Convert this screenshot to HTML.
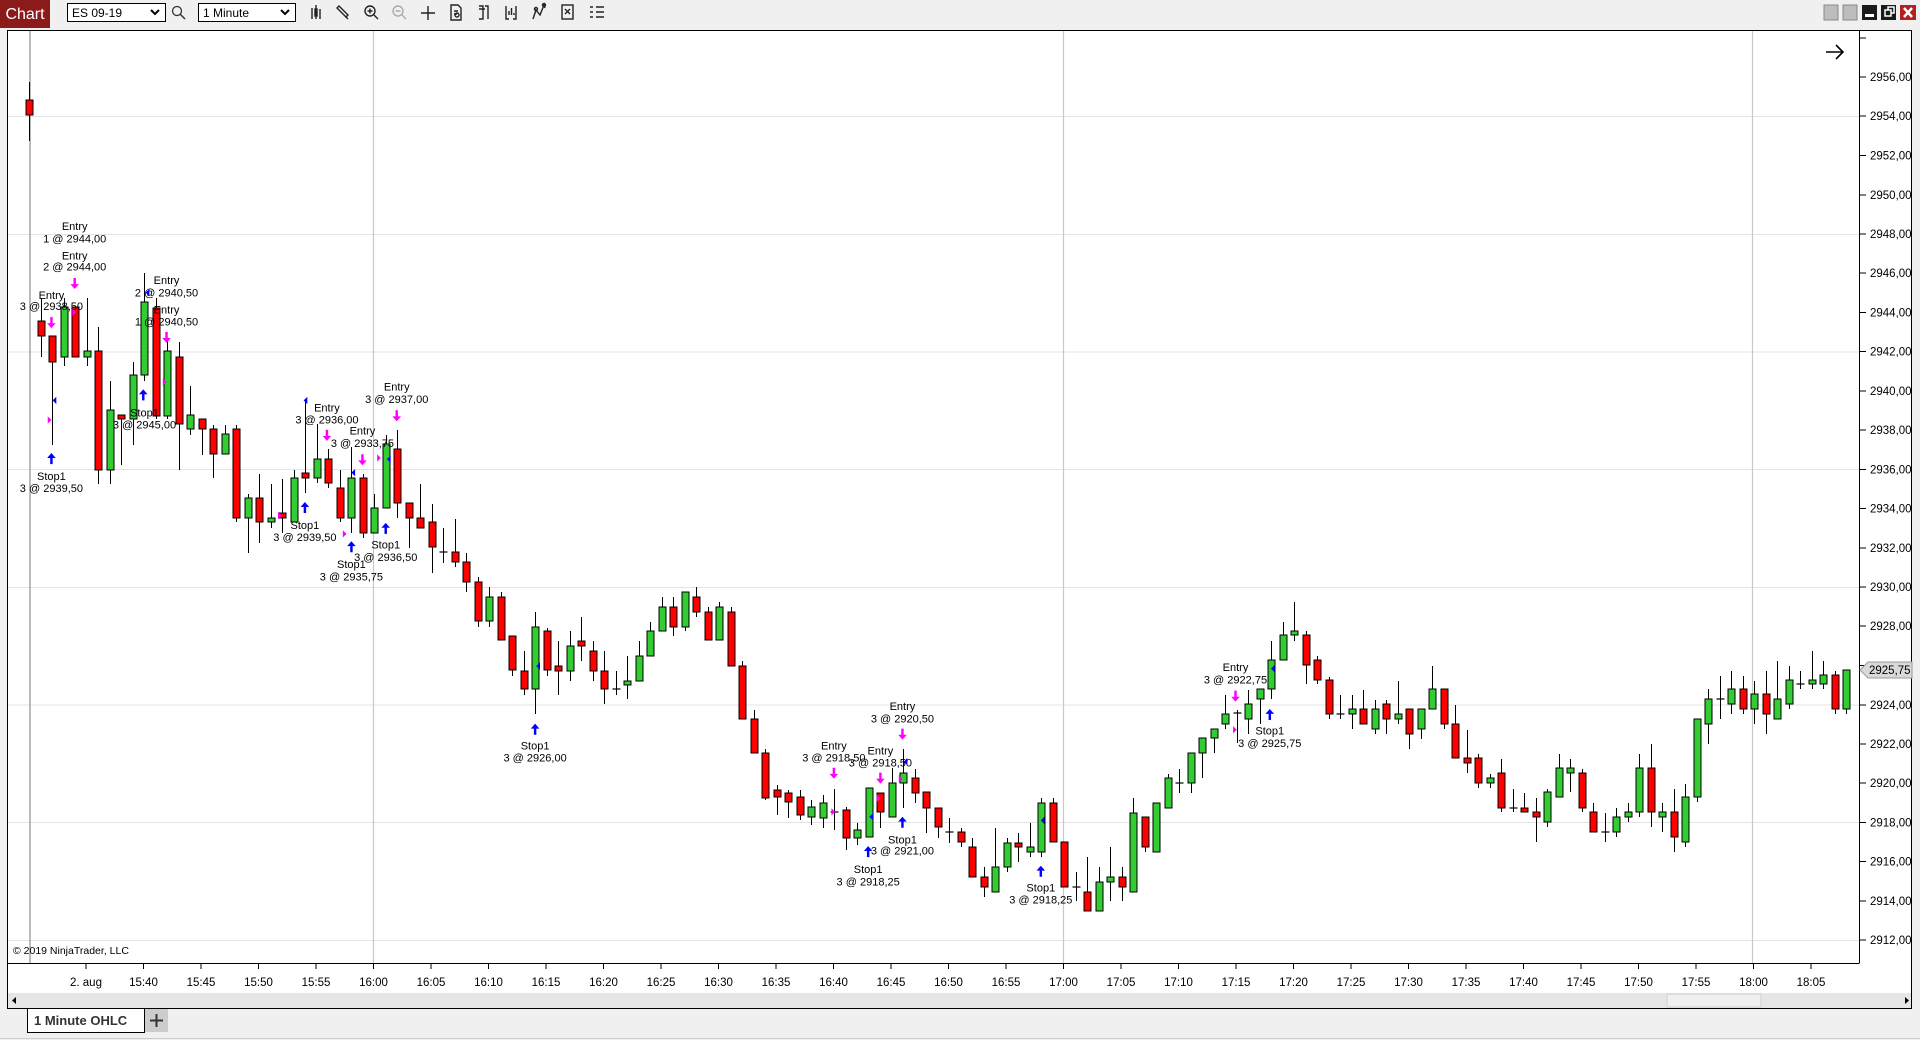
<!DOCTYPE html>
<html><head><meta charset="utf-8">
<style>
html,body{margin:0;padding:0;background:#f0f0f0;width:1920px;height:1040px;overflow:hidden}
svg{display:block}
text{font-family:"Liberation Sans",Arial,sans-serif}
</style></head>
<body>
<svg id="s" width="1920" height="1040" viewBox="0 0 1920 1040" xmlns="http://www.w3.org/2000/svg">
<rect x="0" y="0" width="1920" height="1040" fill="#f0f0f0"/>
<rect x="0" y="0" width="50" height="28" fill="#8b1a1a"/>
<text x="25" y="19" font-size="16" fill="#fff" text-anchor="middle">Chart</text>
<rect x="67.5" y="3.5" width="98" height="18" fill="#fff" stroke="#000"/>
<text x="72" y="17" font-size="12">ES 09-19</text>
<path d="M151 10 l4 4 l4 -4" stroke="#000" stroke-width="2" fill="none"/>
<circle cx="177" cy="11" r="4.5" stroke="#333" stroke-width="1.3" fill="none"/><path d="M180 14 l5 5" stroke="#333" stroke-width="1.5"/>
<rect x="198.5" y="3.5" width="97" height="18" fill="#fff" stroke="#000"/>
<text x="203" y="17" font-size="12">1 Minute</text>
<path d="M281 10 l4 4 l4 -4" stroke="#000" stroke-width="2" fill="none"/>
<g stroke="#222" stroke-width="1.4" fill="none">
<path d="M312 8v11M316 5v14M320 9v10"/><rect x="315" y="9" width="2" height="7" fill="#222"/>
<path d="M339 6l9 9-2 2-9-9zM346 17l2 2"/>
<circle cx="370" cy="11" r="5"/><path d="M374 15l4 4M367.5 11h5M370 8.5v5"/>
<circle cx="398" cy="11" r="5" stroke="#aaa"/><path d="M402 15l4 4M395.5 11h5" stroke="#aaa"/>
<path d="M428 6v14M421 13h14"/>
<path d="M451 5h7l3 3v12h-10zM454 11h4M454 14h3" /><circle cx="457" cy="15" r="2"/>
<path d="M479 6h4v13h-4M479 9h6M485 6h3v13"/>
<path d="M506 6v13h3M516 6v13h-3M509 15v-4M511.5 15v-7M514 15v-2"/>
<path d="M533 19l3-9 4 5 4-10 1 3"/><circle cx="536" cy="9" r="1.5"/><circle cx="544" cy="5" r="1.5"/>
<rect x="562" y="5" width="11" height="14"/><path d="M565 9l5 5M570 9l-5 5"/>
<path d="M590 7h3M590 12h3M590 17h3M596 7h8M596 12h8M596 17h8"/>
</g>
<rect x="1824" y="5" width="14" height="15" fill="#bdbdbd" stroke="#888"/>
<rect x="1843" y="5" width="14" height="15" fill="#bdbdbd" stroke="#888"/>
<rect x="1862" y="5" width="15" height="15" fill="#1a1a1a"/><rect x="1865" y="14" width="9" height="3" fill="#fff"/>
<rect x="1881" y="5" width="15" height="15" fill="#1a1a1a"/><path d="M1885 10h6v6h-6zM1888 10v-3h6v6h-3" stroke="#fff" stroke-width="1.5" fill="none"/>
<rect x="1900" y="5" width="16" height="15" fill="#b22222"/><path d="M1904 8l8 9M1912 8l-8 9" stroke="#fff" stroke-width="2.5"/>

<rect x="7.5" y="30.5" width="1904" height="978" fill="#fff" stroke="#000"/>
<g stroke="#e3e3e3" stroke-width="1">
<path d="M8 116.5H1859M8 234.5H1859M8 352H1859M8 469.5H1859M8 587.5H1859M8 705H1859M8 822.5H1859M8 940.5H1859"/>
</g>
<g stroke="#c8c8c8" stroke-width="1.2">
<path d="M373.5 31V963M1063.5 31V963M1752.5 31V963"/>
</g>
<path d="M30 31V963" stroke="#aaa" stroke-width="1.6"/>
<path d="M1859.5 31V963" stroke="#000"/>
<path d="M8 963.5H1859.5" stroke="#000"/>
<g stroke="#000"><path d="M1859 38h7M1859 77h7M1859 116h7M1859 155.5h7M1859 195h7M1859 234h7M1859 273h7M1859 312.5h7M1859 351.5h7M1859 391h7M1859 430h7M1859 469.5h7M1859 508.5h7M1859 548h7M1859 587h7M1859 626h7M1859 665.5h7M1859 705h7M1859 744h7M1859 783h7M1859 822.5h7M1859 861.5h7M1859 901h7M1859 940h7"/></g>
<g font-size="11.5" fill="#000">
<text x="1870" y="81">2956,00</text><text x="1870" y="120">2954,00</text><text x="1870" y="159.5">2952,00</text><text x="1870" y="199">2950,00</text><text x="1870" y="238">2948,00</text><text x="1870" y="277">2946,00</text><text x="1870" y="316.5">2944,00</text><text x="1870" y="355.5">2942,00</text><text x="1870" y="395">2940,00</text><text x="1870" y="434">2938,00</text><text x="1870" y="473.5">2936,00</text><text x="1870" y="512.5">2934,00</text><text x="1870" y="552">2932,00</text><text x="1870" y="591">2930,00</text><text x="1870" y="630">2928,00</text><text x="1870" y="709">2924,00</text><text x="1870" y="748">2922,00</text><text x="1870" y="787">2920,00</text><text x="1870" y="826.5">2918,00</text><text x="1870" y="865.5">2916,00</text><text x="1870" y="905">2914,00</text><text x="1870" y="944">2912,00</text>
</g>
<path d="M1860 670l8-8h44v16h-44z" fill="#d9d9d9" stroke="#999"/>
<text x="1869" y="674" font-size="11.5">2925,75</text>
<path d="M1826 52h17M1836 45l7 7-7 7" stroke="#000" stroke-width="1.6" fill="none"/>
<g stroke="#000" id="ticks"></g>
<g font-size="11.5" text-anchor="middle">
<text x="86" y="986">2. aug</text><text x="143.5" y="986">15:40</text><text x="201" y="986">15:45</text><text x="258.5" y="986">15:50</text><text x="316" y="986">15:55</text><text x="373.5" y="986">16:00</text><text x="431" y="986">16:05</text><text x="488.5" y="986">16:10</text><text x="546" y="986">16:15</text><text x="603.5" y="986">16:20</text><text x="661" y="986">16:25</text><text x="718.5" y="986">16:30</text><text x="776" y="986">16:35</text><text x="833.5" y="986">16:40</text><text x="891" y="986">16:45</text><text x="948.5" y="986">16:50</text><text x="1006" y="986">16:55</text><text x="1063.5" y="986">17:00</text><text x="1121" y="986">17:05</text><text x="1178.5" y="986">17:10</text><text x="1236" y="986">17:15</text><text x="1293.5" y="986">17:20</text><text x="1351" y="986">17:25</text><text x="1408.5" y="986">17:30</text><text x="1466" y="986">17:35</text><text x="1523.5" y="986">17:40</text><text x="1581" y="986">17:45</text><text x="1638.5" y="986">17:50</text><text x="1696" y="986">17:55</text><text x="1753.5" y="986">18:00</text><text x="1811" y="986">18:05</text>
</g>
<text x="13" y="954" font-size="10.5">© 2019 NinjaTrader, LLC</text>
<rect x="8" y="993" width="1903" height="15" fill="#e6e6e6"/>
<path d="M16 997v7l-4-3.5z" fill="#000"/>
<path d="M1905 997v7l4-3.5z" fill="#000"/>
<rect x="1667" y="994" width="94" height="13" fill="#f0f0f0" stroke="#d0d0d0"/>
<rect x="27.5" y="1008.5" width="117" height="24" fill="#fff" stroke="#000"/>
<text x="34" y="1025" font-size="13" font-weight="bold" fill="#333">1 Minute OHLC</text>
<rect x="145" y="1009" width="23" height="23" fill="#cccccc"/>
<path d="M156.5 1014v13M150 1020.5h13" stroke="#333" stroke-width="2"/>
<path d="M0.5 1038.5H1919.5" stroke="#ccc"/>

<g id="candles"></g>

<g transform="scale(1.22449)" font-size="9" text-anchor="middle" fill="#000">
<text x="61" y="188">Entry</text><text x="61" y="198">1 @ 2944,00</text>
<text x="61" y="212">Entry</text><text x="61" y="221">2 @ 2944,00</text>
<text x="42" y="244">Entry</text><text x="42" y="253">3 @ 2938,50</text>
<text x="42" y="392">Stop1</text><text x="42" y="402">3 @ 2939,50</text>
<text x="136" y="232">Entry</text><text x="136" y="242">2 @ 2940,50</text>
<text x="136" y="256">Entry</text><text x="136" y="266">1 @ 2940,50</text>
<text x="118" y="340">Stop1</text><text x="118" y="350">3 @ 2945,00</text>
<text x="267" y="336">Entry</text><text x="267" y="346">3 @ 2936,00</text>
<text x="296" y="355">Entry</text><text x="296" y="365">3 @ 2933,75</text>
<text x="324" y="319">Entry</text><text x="324" y="329">3 @ 2937,00</text>
<text x="249" y="432">Stop1</text><text x="249" y="442">3 @ 2939,50</text>
<text x="287" y="464">Stop1</text><text x="287" y="474">3 @ 2935,75</text>
<text x="315" y="448">Stop1</text><text x="315" y="458">3 @ 2936,50</text>
<text x="437" y="612">Stop1</text><text x="437" y="622">3 @ 2926,00</text>
<text x="681" y="612">Entry</text><text x="681" y="622">3 @ 2918,50</text>
<text x="719" y="616">Entry</text><text x="719" y="626">3 @ 2918,50</text>
<text x="737" y="580">Entry</text><text x="737" y="590">3 @ 2920,50</text>
<text x="709" y="713">Stop1</text><text x="709" y="723">3 @ 2918,25</text>
<text x="737" y="689">Stop1</text><text x="737" y="698">3 @ 2921,00</text>
<text x="850" y="728">Stop1</text><text x="850" y="738">3 @ 2918,25</text>
<text x="1009" y="548">Entry</text><text x="1009" y="558">3 @ 2922,75</text>
<text x="1037" y="600">Stop1</text><text x="1037" y="610">3 @ 2925,75</text>
</g>
<g id="marks" transform="scale(1.22449)"></g>
</svg>
<script>
var NS="http://www.w3.org/2000/svg";
function el(p,t,a){var e=document.createElementNS(NS,t);for(var k in a)e.setAttribute(k,a[k]);p.appendChild(e);return e;}
var tk=document.getElementById('ticks');
for(var i=4;i<=154;i+=5){var x=40+11.5*i;el(tk,'path',{d:'M'+x+' 963v6'});}
var D=[
[-1,100,115,82,141,'r'],
[0,321,336,298,357,'r'],[1,336,362,336,445,'r'],[2,307,357,298,366,'g'],[3,307,357,307,357,'r'],[4,351,357,298,366,'g'],
[5,351,470,327,484,'r'],[6,410,470,381,484,'g'],[7,415,419,415,465,'r'],[8,375,419,362,445,'g'],[9,302,375,273,381,'g'],
[10,308,416,298,419,'r'],[11,351,416,338,419,'g'],[12,357,424,342,470,'r'],[13,415,429,386,435,'g'],[14,419,429,419,455,'r'],
[15,429,454,425,478,'r'],[16,434,454,425,454,'g'],[17,429,518,425,522,'r'],[18,498,518,494,553,'g'],[19,498,522,474,543,'r'],
[20,518,522,484,528,'g'],[21,513,518,479,533,'r'],[22,478,522,470,522,'g'],[23,473,478,400,493,'r'],[24,459,478,424,483,'g'],
[25,459,483,449,488,'r'],[26,488,518,470,522,'r'],[27,478,518,447,533,'g'],[28,478,533,474,538,'r'],[29,508,533,494,533,'g'],
[30,444,508,435,508,'g'],[31,449,503,430,518,'r'],[32,503,518,503,548,'r'],[33,518,528,484,528,'r'],[34,522,547,504,573,'r'],
[35,552,552,528,563,'d'],[36,552,562,519,567,'r'],[37,562,582,553,592,'r'],[38,582,621,577,627,'r'],[39,597,621,587,627,'g'],
[40,597,640,592,640,'r'],[41,636,670,636,676,'r'],[42,671,689,651,695,'r'],[43,627,689,612,714,'g'],[44,631,670,628,676,'r'],
[45,666,671,641,695,'r'],[46,646,671,631,681,'g'],[47,641,646,617,661,'r'],[48,651,671,641,681,'r'],[49,671,689,651,704,'r'],
[50,689,689,671,695,'d'],[51,681,684,656,699,'g'],[52,656,681,641,681,'g'],[53,631,656,622,656,'g'],[54,607,631,597,631,'g'],
[55,607,627,597,636,'r'],[56,592,627,592,631,'g'],[57,597,612,587,617,'r'],[58,612,640,607,640,'r'],[59,607,640,602,640,'g'],
[60,612,666,607,666,'r'],[61,666,719,661,719,'r'],[62,719,753,710,753,'r'],[63,753,798,749,800,'r'],
[64,790,797,785,815,'r'],[65,793,802,790,818,'r'],[66,797,815,790,820,'r'],[67,807,817,800,825,'g'],[68,803,818,795,828,'g'],
[69,812,812,789,830,'d'],[70,810,838,807,850,'r'],
[71,788,837,788,837,'g'],[72,793,812,793,828,'r'],[73,783,817,768,817,'g'],[74,773,783,749,808,'g'],[75,778,793,769,803,'r'],
[76,792,808,792,833,'r'],[77,808,827,808,838,'r'],[78,832,832,818,843,'d'],[79,832,842,828,847,'r'],[80,847,877,838,877,'r'],
[81,877,887,867,897,'r'],[82,867,892,828,892,'g'],[83,843,867,838,872,'g'],[84,843,847,833,862,'r'],[85,847,852,823,857,'g'],
[86,803,852,798,857,'g'],[87,803,842,798,842,'r'],[88,842,887,842,887,'r'],[89,887,887,872,901,'d'],[90,892,911,857,911,'r'],
[91,882,911,867,911,'g'],[92,877,882,847,901,'g'],[93,877,887,867,901,'r'],[94,813,892,798,892,'g'],[95,817,847,817,852,'r'],
[96,803,852,803,852,'g'],[97,778,808,774,808,'g'],[98,783,783,769,793,'d'],[99,753,783,753,793,'g'],[100,738,753,738,778,'g'],
[101,729,738,729,753,'g'],[102,714,724,695,729,'g'],[103,713,713,710,743,'d'],[104,704,719,690,734,'g'],[105,689,699,689,724,'g'],
[106,660,689,641,699,'g'],[107,635,660,622,660,'g'],[108,631,635,602,641,'g'],[109,635,665,631,684,'r'],[110,660,680,656,684,'r'],
[111,680,714,677,719,'r'],[112,714,714,695,719,'d'],[113,709,714,695,729,'g'],[114,709,724,690,724,'r'],[115,709,729,700,734,'g'],
[116,704,719,700,734,'r'],[117,714,719,681,724,'g'],[118,709,734,709,749,'r'],[119,709,729,709,739,'g'],[120,689,709,666,709,'g'],
[121,689,724,689,729,'r'],[122,724,758,705,758,'r'],[123,758,763,730,773,'r'],[124,758,783,754,788,'r'],[125,778,783,774,788,'g'],
[126,773,808,759,812,'r'],[127,808,808,789,812,'d'],[128,808,812,793,812,'r'],[129,812,817,798,842,'r'],[130,792,822,789,827,'g'],
[131,768,797,754,797,'g'],[132,768,773,759,792,'g'],[133,773,808,769,812,'r'],[134,812,832,803,832,'r'],[135,832,832,813,842,'d'],
[136,817,832,808,837,'g'],[137,812,817,803,822,'g'],[138,768,812,754,817,'g'],[139,768,812,744,827,'r'],[140,812,817,803,832,'g'],
[141,812,837,789,852,'r'],[142,797,842,784,847,'g'],[143,719,797,719,802,'g'],[144,699,724,689,744,'g'],[145,699,699,676,719,'d'],
[146,689,704,671,714,'g'],[147,689,709,676,714,'r'],[148,694,709,681,724,'g'],[149,694,714,671,734,'r'],[150,699,719,661,719,'g'],
[151,680,704,666,709,'g'],[152,684,684,671,689,'d'],[153,680,684,651,689,'g'],[154,675,684,661,689,'g'],[155,675,709,671,714,'r'],
[156,670,709,670,714,'g']
];
var cg=document.getElementById('candles');
function draw(idx,c){
 var x=Math.round(29+11.5*(idx+1))+0.5;
 el(cg,'path',{d:'M'+x+' '+c[3]+'V'+c[4],stroke:'#000','stroke-width':1});
 if(c[5]=='d'){el(cg,'path',{d:'M'+(x-4)+' '+c[1]+'h8',stroke:'#000','stroke-width':1.2});}
 else{var h=Math.max(c[2]-c[1],4);el(cg,'rect',{x:x-3.5,y:c[1],width:7,height:h,fill:c[5]=='r'?'#ff0000':'#32cd32',stroke:'#000','stroke-width':1});}
}
D.forEach(function(c){draw(c[0]>=71?c[0]+1:c[0],c);});
draw(71,[71,830,838,823,845,'g']);
var mg=document.getElementById('marks');
function dn(x,y){el(mg,'path',{d:'M'+(x-1)+' '+(y-6)+'h2v5h2.5l-3.5 4-3.5-4h2.5z',fill:'#ff00ff'});}
function up(x,y){el(mg,'path',{d:'M'+(x-1)+' '+(y+6)+'h2v-5h2.5l-3.5-4-3.5 4h2.5z',fill:'#0000ff'});}
function tr(x,y){el(mg,'path',{d:'M'+x+' '+(y-3)+'l3 3-3 3z',fill:'#ff00ff'});}
function tl(x,y){el(mg,'path',{d:'M'+x+' '+(y-3)+'l-3 3 3 3z',fill:'#0000ff'});}
[[61,233],[42,265],[136,277],[267,357],[296,377],[324,341],[681,633],[719,637],[737,601],[1009,570]].forEach(function(p){dn(p[0],p[1]);});
[[42,373],[117,321],[249,413],[287,445],[315,430],[437,594],[709,694],[737,670],[850,710],[1037,582]].forEach(function(p){up(p[0],p[1]);});
[[39,343],[59,255],[133,312],[227,421],[280,436],[308,374],[679,663],[716,652],[734,636],[1007,596]].forEach(function(p){tr(p[0],p[1]);});
[[46,327],[122,239],[251,327],[290,386],[319,375],[441,544],[713,667],[741,622],[853,670],[1041,546]].forEach(function(p){tl(p[0],p[1]);});
</script>
</body></html>
